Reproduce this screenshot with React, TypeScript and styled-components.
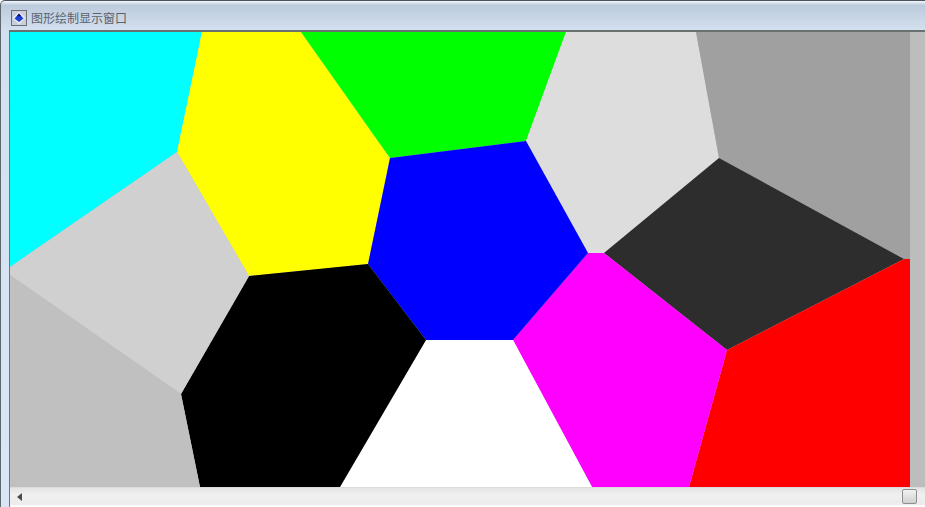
import React from 'react';
import styled, { createGlobalStyle } from 'styled-components';

const GlobalStyle = createGlobalStyle`
    html, body {
        margin: 0;
        padding: 0;
        overflow: hidden;
        background: #fff;
    }
`;

const Window = styled.div`
    width: 925px;
    height: 507px;
    box-sizing: border-box;
    display: flex;
    flex-direction: column;
    padding-left: 1px;
    border-top: 1px solid #4b5562;
    border-left: 1px solid #5e666e;
    border-top-left-radius: 5px;
    background: linear-gradient(to bottom, #f4f7fa 0, #bccbdc 4px, #d3e0ef 30px, #d8e6f5 100%);
    overflow: hidden;
`;

const TitleBar = styled.div`
    height: 29px;
    flex-shrink: 0;
    display: flex;
    align-items: center;
    gap: 4px;
    padding: 5px 0 0 9px;
    box-sizing: border-box;
`;

const AppIcon = styled.div`
    width: 16px;
    height: 16px;
    box-sizing: border-box;
    border: 1px solid #6a6f76;
    background: #c9ced6;
    display: flex;
    align-items: center;
    justify-content: center;
`;

const Title = styled.span`
    font-family: "Noto Sans CJK SC", "Liberation Sans", sans-serif;
    font-size: 12px;
    line-height: 16px;
    color: #5a626c;
`;

const Client = styled.div`
    flex: 1;
    margin-left: 7px;
    display: flex;
    flex-direction: column;
    min-height: 0;
    border-top: 2px solid #69716f;
    border-left: 1px solid #6f7478;
`;

const CanvasArea = styled.div`
    height: 455px;
    background: #bdbdbd;
`;

const Canvas = styled.svg`
    display: block;
`;

const ScrollBar = styled.div`
    height: 18px;
    display: flex;
    align-items: center;
    justify-content: space-between;
    padding: 0 8px 0 7px;
    background: linear-gradient(to bottom, #e4e4e4, #f0f0f0 40%, #ececec);
    border-top: 1px solid #dcdcdc;
    box-sizing: border-box;
`;

const ArrowLeft = styled.span`
    width: 0;
    height: 0;
    border-top: 4px solid transparent;
    border-bottom: 4px solid transparent;
    border-right: 5px solid #4a4a4a;
`;

const Thumb = styled.span`
    width: 15px;
    height: 15px;
    box-sizing: border-box;
    border: 1px solid #8f8f8f;
    border-radius: 2px;
    background: linear-gradient(to bottom, #f2f2f2, #d0d0d0);
`;

const BottomEdge = styled.div`
    height: 2px;
    background: #fdfdfd;
`;

// cell corners, in canvas coordinates (canvas origin is 10,32 on the page)
const cells: { fill: string; points: number[][] }[] = [
    { fill: '#00ffff', points: [[0, 0], [192, 0], [167, 120], [0, 235]] },
    { fill: '#ffff00', points: [[192, 0], [291, 0], [380, 126], [358, 232], [239, 244], [167, 120]] },
    { fill: '#00ff00', points: [[291, 0], [556, 0], [516, 109], [380, 126]] },
    { fill: '#dddddd', points: [[556, 0], [686, 0], [709, 126], [594, 221], [578, 221], [516, 109]] },
    { fill: '#a0a0a0', points: [[686, 0], [900, 0], [900, 227], [894, 227], [709, 126]] },
    { fill: '#2d2d2d', points: [[709, 126], [894, 227], [717, 318], [594, 221]] },
    { fill: '#ff0000', points: [[894, 227], [900, 227], [900, 455], [679, 455], [717, 318]] },
    { fill: '#ff00ff', points: [[578, 221], [594, 221], [717, 318], [679, 455], [582, 455], [503, 308]] },
    { fill: '#ffffff', points: [[416, 308], [503, 308], [582, 455], [330, 455]] },
    { fill: '#0000ff', points: [[380, 126], [516, 109], [578, 221], [503, 308], [416, 308], [358, 232]] },
    { fill: '#000000', points: [[239, 244], [358, 232], [416, 308], [330, 455], [190, 455], [171, 362]] },
    { fill: '#d0d0d0', points: [[167, 120], [239, 244], [171, 362], [0, 243], [0, 235]] },
    { fill: '#c0c0c0', points: [[0, 243], [171, 362], [190, 455], [0, 455]] },
];

const App = () => (
    <Window>
        <GlobalStyle />
        <TitleBar>
            <AppIcon>
                <svg width="14" height="14" viewBox="0 0 14 14">
                    <path d="M7 0.5 L13.5 7 L7 13.5 L0.5 7 Z" fill="#e6ebf5" />
                    <path d="M7 2.5 L11.5 7.5 L7 11 L2.5 7.5 Z" fill="#1c3fd0" />
                    <path d="M7 2.5 L9.2 5.2 L4.8 5.2 Z" fill="#0d1660" />
                </svg>
            </AppIcon>
            <Title>图形绘制显示窗口</Title>
        </TitleBar>
        <Client>
            <CanvasArea>
                <Canvas width="900" height="455" viewBox="0 0 900 455">
                    {cells.map(cell => (
                        <polygon
                            key={cell.fill}
                            fill={cell.fill}
                            points={cell.points.map(p => p.join(',')).join(' ')}
                        />
                    ))}
                </Canvas>
            </CanvasArea>
            <ScrollBar>
                <ArrowLeft />
                <Thumb />
            </ScrollBar>
            <BottomEdge />
        </Client>
    </Window>
);

export default App;
